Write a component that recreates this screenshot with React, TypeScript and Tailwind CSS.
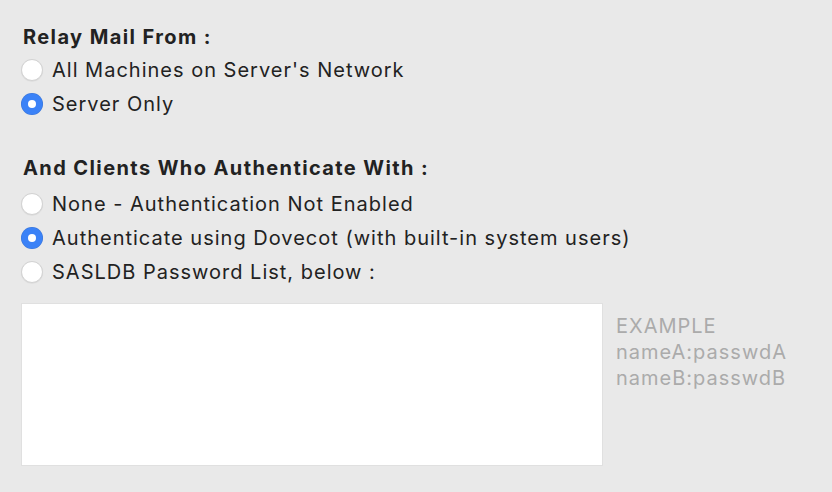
import React from "react";

function Radio({ checked }: { checked?: boolean }) {
  return checked ? (
    <span className="flex h-[22px] w-[22px] shrink-0 items-center justify-center rounded-full bg-[#3b82f7] shadow-[inset_0_0_0_0.5px_rgba(0,0,0,0.12)]">
      <span className="h-[8px] w-[8px] rounded-full bg-white" />
    </span>
  ) : (
    <span className="h-[22px] w-[22px] shrink-0 rounded-full border border-[#d2d2d2] bg-white shadow-[0_0.5px_1px_rgba(0,0,0,0.08)]" />
  );
}

function Option({ label, checked }: { label: string; checked?: boolean }) {
  return (
    <div className="flex h-[34px] items-center gap-[9px]">
      <Radio checked={checked} />
      <span>{label}</span>
    </div>
  );
}

export default function App() {
  return (
    <div
      className="h-[492px] w-[832px] bg-[#e9e9e9] pl-[21px] pt-[20px] text-[20px] leading-none tracking-[1px] text-[#222222]"
      style={{ fontFamily: "Inter, 'Liberation Sans', sans-serif" }}
    >
      <div className="flex h-[33px] items-center pl-[2px] font-bold tracking-[1.4px]">Relay Mail From :</div>
      <Option label="All Machines on Server's Network" />
      <Option label="Server Only" checked />
      <div className="mb-[3px] mt-[30px] flex h-[33px] items-center pl-[2px] font-bold tracking-[1.4px]">
        And Clients Who Authenticate With :
      </div>
      <Option label="None - Authentication Not Enabled" />
      <Option label="Authenticate using Dovecot (with built-in system users)" checked />
      <Option label="SASLDB Password List, below :" />
      <div className="mt-[14px] flex gap-[13px]">
        <div className="h-[163px] w-[582px] border border-[#e0e0e0] bg-white" />
        <div className="pt-[10px] text-[20px] leading-[26px] tracking-[1px] text-[#ababab]">
          <div>EXAMPLE</div>
          <div>nameA:passwdA</div>
          <div>nameB:passwdB</div>
        </div>
      </div>
    </div>
  );
}
